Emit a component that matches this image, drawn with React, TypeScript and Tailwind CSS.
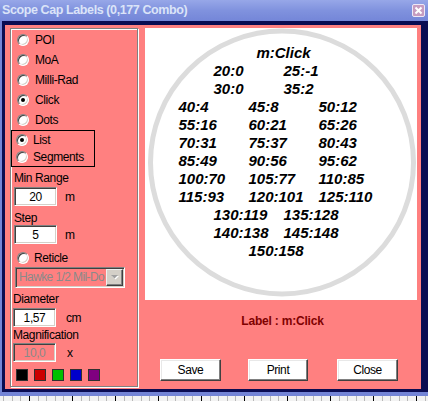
import React from "react";

function Radio({ checked }: { checked?: boolean }) {
  return (
    <span className="relative inline-block w-[12px] h-[12px] shrink-0 rounded-full bg-white border border-t-[#808080] border-l-[#808080] border-b-white border-r-white shadow-[inset_1px_1px_0_#404040,inset_-1px_-1px_0_#d4d0c8]">
      {checked && <span className="absolute left-[3px] top-[3px] w-[4px] h-[4px] rounded-full bg-black" />}
    </span>
  );
}

function Field({ value, disabled }: { value: string; disabled?: boolean }) {
  return (
    <div
      className={
        disabled
          ? "h-[19px] w-[43px] flex items-center justify-center bg-[#ff8080] text-[#8a8a8a] border border-t-[#808080] border-l-[#808080] border-b-white border-r-white shadow-[inset_1px_1px_0_#404040,inset_-1px_-1px_0_#d4d0c8]"
          : "h-[19px] w-[43px] flex items-center justify-center bg-white text-black border border-t-[#808080] border-l-[#808080] border-b-white border-r-white shadow-[inset_1px_1px_0_#404040,inset_-1px_-1px_0_#d4d0c8]"
      }
    >
      {value}
    </div>
  );
}

function Btn({ label, className }: { label: string; className: string }) {
  return (
    <div
      className={
        "h-[22px] flex items-center justify-center bg-white text-black text-[12px] border border-t-white border-l-white border-b-[#404040] border-r-[#404040] shadow-[inset_-1px_-1px_0_#808080,inset_1px_1px_0_#e8e8e8] " +
        className
      }
    >
      {label}
    </div>
  );
}

const rows: string[][] = [
  ["20:0", "25:-1"],
  ["30:0", "35:2"],
  ["40:4", "45:8", "50:12"],
  ["55:16", "60:21", "65:26"],
  ["70:31", "75:37", "80:43"],
  ["85:49", "90:56", "95:62"],
  ["100:70", "105:77", "110:85"],
  ["115:93", "120:101", "125:110"],
  ["130:119", "135:128"],
  ["140:138", "145:148"],
  ["150:158"],
];

const topRadios: [string, boolean][] = [
  ["POI", false],
  ["MoA", false],
  ["Milli-Rad", false],
  ["Click", true],
  ["Dots", false],
];

export default function App() {
  const minorTicks: number[] = [];
  for (let x = 29 - 43; x < 440; x += 8.6) minorTicks.push(Math.round(x));
  const majorTicks: number[] = [];
  for (let x = 29 - 43; x < 440; x += 43) majorTicks.push(Math.round(x));

  return (
    <div className="w-[428px] h-[401px] overflow-hidden flex flex-col bg-[#f2f2f2] font-['Liberation_Sans',Arial,sans-serif] text-[12px] tracking-[-0.4px] text-black">
      {/* title bar */}
      <div className="h-[21px] shrink-0 flex items-center justify-between bg-linear-to-b from-[#97a7e8] via-[#8092de] to-[#7486d8] pl-[2px] pr-[3px]">
        <span className="text-[12.5px] font-bold tracking-[-0.4px] text-[#dbe4f8] leading-none pb-[1px] whitespace-nowrap">
          Scope Cap Labels (0,177 Combo)
        </span>
        <div className="w-[13px] h-[13px] rounded-[2px] border border-[#eee8f6] bg-[#c69cc0] flex items-center justify-center">
          <svg width="9" height="9" viewBox="0 0 9 9">
            <path d="M1.5 1.5 L7.5 7.5 M7.5 1.5 L1.5 7.5" stroke="#ffffff" strokeWidth="2" />
          </svg>
        </div>
      </div>

      {/* window frame */}
      <div className="shrink-0 bg-[#7384d6] pl-[2px] pb-[4px]">
        <div className="bg-[#0a0c52] pt-[4px] pl-[3px] pr-[7px] pb-[3px]">
          <div className="h-[364px] w-[416px] bg-[#ff8080] flex items-start">
            {/* left group box */}
            <div className="ml-[5px] mt-[3px] w-[128px] h-[359px] border border-[#808080] shadow-[inset_1px_1px_0_#ffffff,1px_1px_0_#ffffff] flex flex-col pt-[1px]">
              {topRadios.map(([t, c]) => (
                <div key={t} className="h-[20px] flex items-center pl-[6px] gap-[6px]">
                  <Radio checked={c} />
                  <span>{t}</span>
                </div>
              ))}
              <div className="w-[84px] h-[37px] border border-black flex flex-col">
                <div className="h-[17px] flex items-center pl-[4px] gap-[5px]">
                  <Radio checked />
                  <span>List</span>
                </div>
                <div className="h-[18px] flex items-center pl-[4px] gap-[5px]">
                  <Radio />
                  <span>Segments</span>
                </div>
              </div>

              <div className="mt-[4px] h-[14px] leading-[14px] pl-[3px]">Min Range</div>
              <div className="mt-[2px] flex items-center pl-[3px]">
                <Field value="20" />
                <span className="ml-[8px]">m</span>
              </div>

              <div className="mt-[5px] h-[14px] leading-[14px] pl-[3px]">Step</div>
              <div className="flex items-center pl-[3px]">
                <Field value="5" />
                <span className="ml-[8px]">m</span>
              </div>

              <div className="mt-[6px] h-[16px] flex items-center pl-[6px] gap-[5px]">
                <Radio />
                <span>Reticle</span>
              </div>

              <div className="mt-[1px] ml-[4px] w-[110px] h-[21px] flex items-stretch bg-[#ff8080] border border-t-[#808080] border-l-[#808080] border-b-white border-r-white shadow-[inset_1px_1px_0_#404040,inset_-1px_-1px_0_#d4d0c8] p-[1px]">
                <div className="flex-1 whitespace-nowrap text-[#8a8a8a] pl-[2px] leading-[17px] tracking-[-0.6px]">
                  Hawke 1/2 Mil-Do
                </div>
                <div className="w-[17px] shrink-0 bg-[#d4d0c8] border border-t-[#f0f0f0] border-l-[#f0f0f0] border-b-[#404040] border-r-[#404040] shadow-[inset_-1px_-1px_0_#808080] flex items-center justify-center">
                  <svg width="8" height="5" viewBox="0 0 8 5">
                    <path d="M1 1 L8 1 L4.5 4.5 Z" fill="#ffffff" />
                    <path d="M0 0 L7 0 L3.5 3.5 Z" fill="#a0a0a0" />
                  </svg>
                </div>
              </div>

              <div className="mt-[4px] h-[14px] leading-[14px] pl-[2px]">Diameter</div>
              <div className="mt-[2px] flex items-center pl-[2px]">
                <Field value="1,57" />
                <span className="ml-[10px]">cm</span>
              </div>

              <div className="mt-[1px] h-[14px] leading-[14px] pl-[2px]">Magnification</div>
              <div className="mt-[1px] flex items-center pl-[2px]">
                <Field value="10,0" disabled />
                <span className="ml-[11px]">x</span>
              </div>

              <div className="mt-[7px] ml-[5px] flex gap-[6px]">
                <div className="w-[12px] h-[12px] border border-[#303030] bg-black" />
                <div className="w-[12px] h-[12px] border border-[#303030] bg-[#cc0000]" />
                <div className="w-[12px] h-[12px] border border-[#303030] bg-[#00c000]" />
                <div className="w-[12px] h-[12px] border border-[#303030] bg-[#0000cc]" />
                <div className="w-[12px] h-[12px] border border-[#303030] bg-[#800080]" />
              </div>
            </div>

            {/* right column */}
            <div className="ml-[7px] mt-[3px] w-[272px] flex flex-col">
              <div className="relative w-[272px] h-[272px] bg-white overflow-hidden">
                <svg className="absolute inset-0" width="272" height="272" viewBox="0 0 272 272">
                  <circle cx="137" cy="134.5" r="131.5" fill="none" stroke="#dcdcdc" strokeWidth="5" />
                </svg>
                <div className="relative pt-[16px] pl-[5px] flex flex-col items-stretch font-bold italic text-[15px] tracking-normal leading-[18px]">
                  <div className="h-[18px] text-center">m:Click</div>
                  {rows.map((r, i) => (
                    <div key={i} className="h-[18px] flex justify-center">
                      {r.map((t) => (
                        <span key={t} className="w-[70px] text-left">
                          {t}
                        </span>
                      ))}
                    </div>
                  ))}
                </div>
              </div>
              <div className="mt-[14px] h-[14px] leading-[14px] text-center font-bold text-[12px] tracking-[-0.2px] text-[#800000] pl-[3px]">
                Label : m:Click
              </div>
              <div className="mt-[31px] flex">
                <Btn label="Save" className="ml-[15px] w-[61px]" />
                <Btn label="Print" className="ml-[27px] w-[60px]" />
                <Btn label="Close" className="ml-[29px] w-[61px]" />
              </div>
            </div>
          </div>
        </div>
      </div>

      {/* ruler behind */}
      <svg className="shrink-0" width="428" height="5" viewBox="0 0 428 5">
        <rect width="428" height="5" fill="#f2f2f2" />
        {minorTicks.map((x, i) => (
          <rect key={"m" + i} x={x} y={0} width={1} height={5} fill="#b8b8b8" />
        ))}
        {majorTicks.map((x, i) => (
          <rect key={"M" + i} x={x} y={0} width={1} height={5} fill="#000000" />
        ))}
      </svg>
    </div>
  );
}
